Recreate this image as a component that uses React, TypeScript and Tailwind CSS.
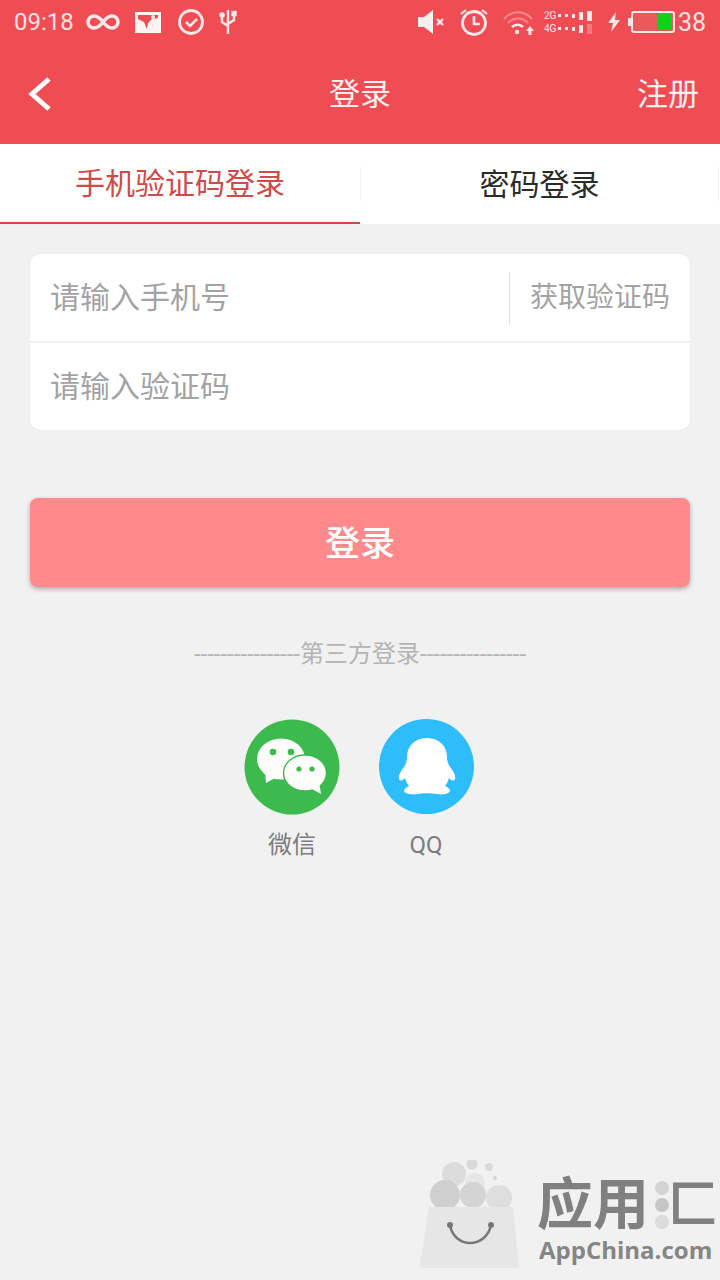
const cjk = "font-['Roboto','Noto_Sans_CJK_SC',sans-serif]";

function StatusLeft() {
  return (
    <div className="flex items-center">
      <span className="text-[24px] leading-none text-[#fde3e3] w-[60px] ml-[14px]">09:18</span>
      <svg className="ml-[12px]" width="34" height="20" viewBox="0 0 34 20" fill="none" stroke="#fde8e8" strokeWidth="3.5">
        <path d="M17 10c-3-4-6-6-9-6a6 6 0 0 0 0 12c3 0 6-2 9-6s6-6 9-6a6 6 0 0 1 0 12c-3 0-6-2-9-6z" />
      </svg>
      <svg className="ml-[14px]" width="28" height="24" viewBox="0 0 28 24">
        <rect x="1" y="2" width="26" height="21" fill="#fdf3f3" />
        <path d="M4 5h20v3l-6 1-4 4-1 6-3-7-6-3z" fill="#ee4a52" />
        <circle cx="19" cy="7" r="2" fill="#fde8e8" />
      </svg>
      <svg className="ml-[15px]" width="28" height="28" viewBox="0 0 28 28" fill="none" stroke="#fde8e8">
        <circle cx="14" cy="14" r="11.5" strokeWidth="2.8" />
        <path d="M9 14l4 4 7-7" strokeWidth="2.6" />
      </svg>
      <svg className="ml-[13px]" width="20" height="28" viewBox="0 0 20 28" fill="none" stroke="#fde8e8" strokeWidth="2.4">
        <path d="M10 2v24M4 8v6l6 4M16 7v5l-6 4" />
        <circle cx="4" cy="7" r="1.6" fill="#fde8e8" />
        <rect x="14.5" y="4" width="3" height="3" fill="#fde8e8" />
      </svg>
    </div>
  );
}

function StatusRight() {
  return (
    <div className="flex items-center">
      <svg width="30" height="26" viewBox="0 0 30 26">
        <path d="M1 8h6l9-7v24l-9-7H1z" fill="#f7f0ee" />
        <path d="M20 10l6 6M26 10l-6 6" stroke="#fde8e8" strokeWidth="2.4" />
      </svg>
      <svg className="ml-[12px]" width="30" height="30" viewBox="0 0 30 30" fill="none" stroke="#fde8e8">
        <circle cx="15" cy="16" r="11.5" strokeWidth="2.8" />
        <path d="M15 9v8h6" strokeWidth="2.6" />
        <path d="M2 7l5-4M28 7l-5-4" strokeWidth="2" />
      </svg>
      <svg className="ml-[13px]" width="33" height="28" viewBox="0 0 33 28" fill="none">
        <path d="M2 11c8-9 20-9 28 0" stroke="#f58a8e" strokeWidth="2" />
        <path d="M6 15c6-6 14-6 20 0" stroke="#f58a8e" strokeWidth="2" />
        <path d="M10 19c3-3 8-3 11 0" stroke="#fde8e8" strokeWidth="2.6" />
        <circle cx="15" cy="24" r="2.2" fill="#fde8e8" />
        <path d="M28 18l-4 5h2.5v4h3v-4H32z" fill="#fde8e8" />
      </svg>
      <div className="ml-[9px] w-[48px] flex flex-col gap-[3px]">
        <SignalRow label="2G" fade={false} />
        <SignalRow label="4G" fade />
      </div>
      <svg className="ml-[15px]" width="14" height="22" viewBox="0 0 14 22">
        <path d="M9 1L1 12h5l-2 9 9-12H8z" fill="#fde8e8" />
      </svg>
      <div className="ml-[7px] flex items-center">
        <span className="w-[3px] h-[8px] bg-[#fde8e8]" />
        <div className="w-[44px] h-[22px] border-[2px] border-[#fde8e8] rounded-[3px] bg-[#e85a5c] flex justify-end p-[1px] pr-[2px]">
          <div className="w-[14px] bg-[#0fd11a]" />
        </div>
      </div>
      <span className="ml-[3px] mr-[14px] text-[25px] leading-none text-[#fde3e3]">38</span>
    </div>
  );
}

function SignalRow({ label, fade }: { label: string; fade: boolean }) {
  const bars = [
    { w: 3, h: 3 },
    { w: 3, h: 3 },
    { w: 3, h: 4 },
    { w: 4, h: 8 },
    { w: 5, h: 10 },
  ];
  return (
    <div className="flex items-center justify-between h-[10px]">
      <span className="text-[10px] leading-none text-[#fde8e8] w-[14px]">{label}</span>
      <span className="flex items-center gap-[4px]">
        {bars.map((b, i) => (
          <span
            key={i}
            className="bg-[#fde8e8]"
            style={{ width: b.w, height: b.h, opacity: fade && i === 4 ? 0.3 : 1 }}
          />
        ))}
      </span>
    </div>
  );
}

function Penguin() {
  return (
    <svg width="58" height="60" viewBox="0 0 58 60">
      <path
        d="M29 1c13 0 20 9 20 19 0 4 1 7 3 10 3 4 6 8 5 12-1 2-3 2-5 0l-1-1c-1 3-2 6-4 8 3 1 5 3 5 5-1 3-8 4-13 3-6-1-14-1-20 0-5 1-12 0-13-3 0-2 2-4 5-5-2-2-3-5-4-8l-1 1c-2 2-4 2-5 0-1-4 2-8 5-12 2-3 3-6 3-10C9 10 16 1 29 1z"
        fill="#ffffff"
      />
    </svg>
  );
}

function Wechat() {
  return (
    <svg width="96" height="96" viewBox="0 0 96 96">
      <circle cx="48" cy="48" r="47.5" fill="#3dba4e" />
      <ellipse cx="37" cy="40" rx="24" ry="20.5" fill="#fdfdfb" />
      <path d="M21 53l1 11 13-7z" fill="#fdfdfb" />
      <circle cx="29" cy="33" r="3.3" fill="#3dba4e" />
      <circle cx="47" cy="33" r="3.3" fill="#3dba4e" />
      <ellipse cx="61" cy="54" rx="21.5" ry="18" fill="#fdfdfb" stroke="#3dba4e" strokeWidth="1.4" />
      <path d="M66 69l11 6-2-12z" fill="#fdfdfb" />
      <circle cx="55" cy="50" r="2.6" fill="#3dba4e" />
      <circle cx="68" cy="50" r="2.6" fill="#3dba4e" />
    </svg>
  );
}

function Watermark() {
  return (
    <div className="absolute left-[420px] top-[1160px] w-[298px] h-[120px]">
      <svg className="absolute left-0 top-0" width="104" height="110" viewBox="0 0 104 110">
        <circle cx="34" cy="14" r="12" fill="#dcdcdc" />
        <circle cx="52" cy="4" r="5.5" fill="#d8d8d8" />
        <circle cx="69" cy="7" r="4" fill="#dadada" />
        <circle cx="75" cy="18" r="2" fill="#d4d4d4" />
        <circle cx="55" cy="23" r="10" fill="#e6e6e6" />
        <circle cx="25" cy="35" r="15" fill="#cfcfcf" />
        <circle cx="53" cy="35" r="13" fill="#d4d4d4" />
        <circle cx="79" cy="38" r="13" fill="#dedede" />
        <path d="M9 47h84l6 58q0 3-4 3H4q-4 0-4-3z" fill="#e6e6e6" />
        <path d="M30 65c4 24 36 24 41 0" fill="none" stroke="#777777" strokeWidth="2.5" />
        <circle cx="30" cy="65" r="3" fill="#777777" />
        <circle cx="71" cy="65" r="3" fill="#777777" />
      </svg>
      <div className="absolute left-[117px] top-[10px] flex items-center text-[#808080] font-bold text-[56px] leading-[70px] whitespace-nowrap">
        <span>应用</span>
        <span className="flex flex-col gap-[3px] ml-[6px]">
          <span className="w-[14px] h-[14px] rounded-full bg-[#d4d4d4]" />
          <span className="w-[14px] h-[14px] rounded-full bg-[#c6c6c6]" />
          <span className="w-[14px] h-[14px] rounded-full bg-[#dcdcdc]" />
        </span>
        <span className="text-[50px] -ml-[1px]">匚</span>
      </div>
      <div className="absolute left-[119px] top-[75px] font-['Open_Sans',sans-serif] text-[#858585] font-bold text-[24px] leading-[30px] whitespace-nowrap">
        AppChina.com
      </div>
    </div>
  );
}

export default function App() {
  return (
    <div className={`relative w-[720px] h-[1280px] overflow-hidden bg-[#f1f1f1] ${cjk}`}>
      <div className="h-[144px] bg-[#ef4c54] flex flex-col">
        <div className="h-[44px] flex items-center justify-between">
          <StatusLeft />
          <StatusRight />
        </div>
        <div className="relative flex-1 flex items-center justify-between pl-[28px] pr-[21px] text-[#fdf0f0]">
          <svg width="24" height="34" viewBox="0 0 24 34" fill="none" stroke="#ffffff" strokeWidth="5">
            <path d="M21 2L4 17l17 15" />
          </svg>
          <span className="absolute left-0 right-0 text-center text-[31px] leading-none">登录</span>
          <span className="text-[31px] leading-none">注册</span>
        </div>
      </div>

      <div className="h-[80px] bg-white flex">
        <div className="w-[360px] border-b-2 border-[#d9453f] flex items-center justify-center text-[30px] text-[#cf4a48]">
          手机验证码登录
        </div>
        <div className="w-[360px] flex items-center justify-between text-[30px] text-[#2b2b2b]">
          <span className="w-px h-[34px] bg-[#f2f2f2]" />
          <span>密码登录</span>
          <span className="w-px h-[34px] mr-[1px] bg-[#f2f2f2]" />
        </div>
      </div>

      <div className="mx-[30px] mt-[30px] rounded-[10px] bg-white shadow-[0_0_2px_rgba(0,0,0,0.08)] text-[#a3a3a3]">
        <div className="h-[89px] flex items-center border-b-2 border-[#f1f1f1]">
          <span className="flex-1 pl-[21px] text-[30px] -ml-px">请输入手机号</span>
          <span className="h-[52px] w-[181px] border-l border-[#dedede] flex items-center justify-center text-[28px]">
            获取验证码
          </span>
        </div>
        <div className="h-[87px] flex items-center pl-[20px] text-[30px]">请输入验证码</div>
      </div>

      <div className="mx-[30px] mt-[68px] h-[89px] rounded-[8px] bg-[#ff8a8c] shadow-[0_2px_5px_rgba(0,0,0,0.3)] flex items-center justify-center pt-[6px] text-[35px] font-medium text-white">
        登录
      </div>

      <div className="mt-[50px] h-[34px] flex items-center justify-center text-[24px] leading-none text-[#b4b4b4] whitespace-nowrap">
        ----------------第三方登录----------------
      </div>

      <div className="mt-[48px] flex justify-center gap-[39px] ml-[-1px] text-[24px] text-[#7c7c7c]">
        <div className="flex flex-col items-center w-[96px]">
          <Wechat />
          <span className="mt-[12px] leading-[36px]">微信</span>
        </div>
        <div className="flex flex-col items-center w-[96px]">
          <div className="w-[95px] h-[95px] self-start rounded-full bg-[#2ebdfb] flex items-center justify-center">
            <Penguin />
          </div>
          <span className="mt-[13px] leading-[36px] -ml-[2px]">QQ</span>
        </div>
      </div>

      <Watermark />
    </div>
  );
}
